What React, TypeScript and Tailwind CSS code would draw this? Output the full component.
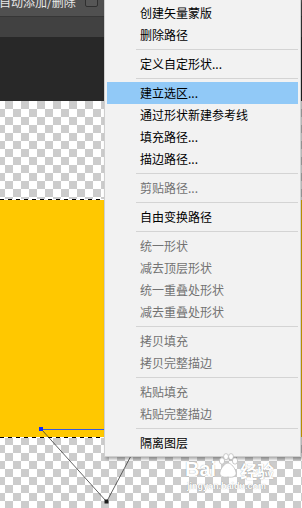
import React from 'react';

type Item = { label: string; disabled?: boolean; active?: boolean } | 'sep';

const MENU: Item[] = [
  { label: '创建矢量蒙版' },
  { label: '删除路径' },
  'sep',
  { label: '定义自定形状...' },
  'sep',
  { label: '建立选区...', active: true },
  { label: '通过形状新建参考线' },
  { label: '填充路径...' },
  { label: '描边路径...' },
  'sep',
  { label: '剪贴路径...', disabled: true },
  'sep',
  { label: '自由变换路径' },
  'sep',
  { label: '统一形状', disabled: true },
  { label: '减去顶层形状', disabled: true },
  { label: '统一重叠处形状', disabled: true },
  { label: '减去重叠处形状', disabled: true },
  'sep',
  { label: '拷贝填充', disabled: true },
  { label: '拷贝完整描边', disabled: true },
  'sep',
  { label: '粘贴填充', disabled: true },
  { label: '粘贴完整描边', disabled: true },
  'sep',
  { label: '隔离图层' },
];

function ContextMenu() {
  return (
    <div className="absolute left-[104px] top-0 w-[197px] bg-[#f2f2f2] border border-t-0 border-[#cfcfcf] pt-[2px] pb-[2px] shadow-[2px_2px_3px_rgba(0,0,0,0.35)]">
      {MENU.map((item, i) =>
        item === 'sep' ? (
          <div key={i} className="h-[7px] flex items-center pl-[31px] pr-[2px]">
            <div className="h-px w-full bg-[#d4d4d4]" />
          </div>
        ) : (
          <div
            key={i}
            className={
              'h-[22px] mx-[2px] pl-[33px] flex items-center text-[12px] leading-none whitespace-nowrap ' +
              (item.active ? 'bg-[#91c9f7] ' : '') +
              (item.disabled ? 'text-[#727272]' : 'text-black')
            }
          >
            {item.label}
          </div>
        )
      )}
    </div>
  );
}

// faint baidu jingyan watermark over the canvas
function Watermark() {
  return (
    <div className="absolute left-[185px] top-[453px] flex flex-col items-start text-white [text-shadow:0_0_1px_rgba(0,0,0,0.4)]">
      <div className="flex items-end">
        <span className="text-[20px] font-bold leading-none font-['Liberation_Sans',sans-serif]">Bai</span>
        <svg width="22" height="26" viewBox="0 0 22 26" className="mx-[1px]">
          <g fill="#fff" stroke="#bdbdbd" strokeWidth="0.8">
            <ellipse cx="5" cy="8" rx="2.6" ry="3.2" />
            <ellipse cx="9" cy="3.6" rx="2.4" ry="3" />
            <ellipse cx="14" cy="3.6" rx="2.4" ry="3" />
            <ellipse cx="18" cy="8" rx="2.6" ry="3.2" />
            <path d="M11 10c-3 0-7 5-8 9-1 4 3 6 8 5 5 1 9-1 8-5-1-4-5-9-8-9z" />
          </g>
        </svg>
        <span className="text-[17px] font-bold leading-none">经验</span>
      </div>
      <span className="mt-[3px] ml-[2px] text-[9px] leading-none font-['Liberation_Sans',sans-serif] font-bold">jingyan.baidu.com</span>
    </div>
  );
}

export default function App() {
  return (
    <div className="relative w-[302px] h-[508px] overflow-hidden bg-[#282828] font-['Microsoft_YaHei','Noto_Sans_CJK_SC',sans-serif]">
      <div className="flex flex-col h-full">
        <div className="h-[16px] bg-[#505050] flex items-start overflow-hidden">
          <span className="-mt-[5px] -ml-[1px] h-[14px] leading-[14px] text-[12px] text-[#e8e8e8] whitespace-nowrap">自动添加/删除</span>
          <div className="ml-[9px] -mt-[6px] w-[13px] h-[13px] rounded-[2px] border border-[#2f2f2f] bg-[#565656]" />
        </div>
        <div className="h-px bg-[#363636]" />
        <div className="h-[20px] bg-[#414141]" />
        <div className="h-[64px] bg-[#282828]" />
        <div className="flex-1 bg-[conic-gradient(#cccccc_25%,#ffffff_0_50%,#cccccc_0_75%,#ffffff_0)] bg-[length:16px_16px] bg-[position:-3px_0px]">
          <div className="mt-[98px] h-px bg-[repeating-linear-gradient(90deg,#000_0_4px,#fff_4px_8px)]" />
          <div className="h-[237px] bg-[#ffc800]" />
          <div className="h-px bg-[repeating-linear-gradient(90deg,#000_0_4px,#fff_4px_8px)]" />
        </div>
      </div>

      <svg className="absolute left-0 top-0" width="302" height="508">
        <line x1="43" y1="429.5" x2="150" y2="429.5" stroke="#3a5bd8" strokeWidth="1" />
        <line x1="42" y1="430" x2="106" y2="501" stroke="#3a3a3a" strokeWidth="0.8" />
        <line x1="107" y1="501" x2="150" y2="420" stroke="#3a3a3a" strokeWidth="0.8" />
        <rect x="39" y="427" width="4" height="4" fill="#0a2cff" />
        <rect x="104.5" y="499.5" width="4" height="4" fill="#1e1e1e" />
      </svg>

      <ContextMenu />
      <Watermark />
    </div>
  );
}
